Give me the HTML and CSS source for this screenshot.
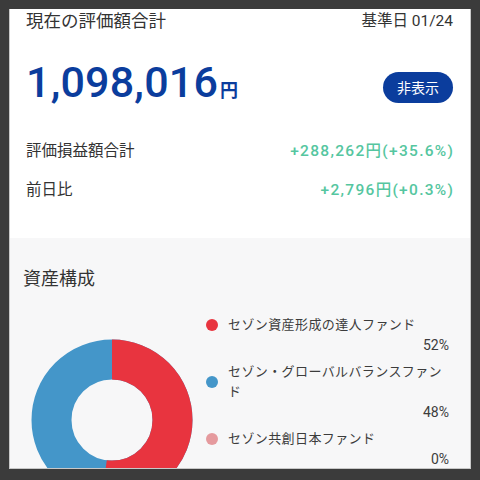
FILE: index.html
```html
<!DOCTYPE html>
<html lang="ja">
<head>
<meta charset="utf-8">
<link rel="stylesheet" href="styles.css">
</head>
<body>
<div class="panel">
  <section class="summary">
    <div class="header">
      <h1 class="title">現在の評価額合計</h1>
      <span class="date">基準日 01/24</span>
    </div>
    <div class="amount-row">
      <div class="amount"><span class="num">1,098,016</span><span class="yen">円</span></div>
      <button class="hide-btn">非表示</button>
    </div>
    <div class="stat">
      <span class="label">評価損益額合計</span>
      <span class="value">+288,262円(+35.6%)</span>
    </div>
    <div class="stat">
      <span class="label">前日比</span>
      <span class="value">+2,796円(+0.3%)</span>
    </div>
  </section>
  <section class="assets">
    <h2 class="assets-title">資産構成</h2>
    <div class="chart-row">
      <svg class="donut" width="162" height="162" viewBox="0 0 162 162">
        <circle cx="81" cy="81" r="60.5" fill="none" stroke="#4496c9" stroke-width="40"/>
        <circle cx="81" cy="81" r="60.5" fill="none" stroke="#e8343f" stroke-width="40" stroke-dasharray="197.67 400" transform="rotate(-90 81 81)"/>
      </svg>
      <ul class="legend">
        <li class="item">
          <div class="name-row"><span class="dot red"></span><span class="name">セゾン資産形成の達人ファンド</span></div>
          <div class="pct">52%</div>
        </li>
        <li class="item">
          <div class="name-row"><span class="dot blue"></span><span class="name">セゾン・グローバルバランスファンド</span></div>
          <div class="pct">48%</div>
        </li>
        <li class="item">
          <div class="name-row"><span class="dot pink"></span><span class="name">セゾン共創日本ファンド</span></div>
          <div class="pct">0%</div>
        </li>
      </ul>
    </div>
  </section>
</div>
</body>
</html>
```
FILE: styles.css
```css
* { box-sizing: border-box; }
html, body { margin: 0; padding: 0; }
body {
  background: #3b3b3b;
  padding: 9px 9px 11px 9px;
  font-family: Roboto, "Noto Sans CJK JP", sans-serif;
  color: #333;
}
.panel {
  height: 460px;
  background: #fff;
  border: 1px solid #c8c8c8;
  border-top: none;
  overflow: hidden;
  display: flex;
  flex-direction: column;
}
.summary {
  flex: none;
  height: 229px;
  padding: 0 17px 0 16px;
  background: #fff;
}
.header {
  display: flex;
  justify-content: space-between;
  align-items: center;
  height: 25px;
}
.title {
  margin: 0;
  font-size: 17.5px;
  font-weight: 400;
  line-height: 25px;
}
.date {
  font-size: 15.5px;
  line-height: 25px;
}
.amount-row {
  margin-top: 28px;
  height: 50px;
  display: flex;
  justify-content: space-between;
  align-items: center;
}
.amount {
  color: #0b3d9d;
  font-weight: 500;
  line-height: 50px;
}
.num {
  font-size: 43px;
  letter-spacing: 0.2px;
}
.yen {
  font-size: 18px;
  font-weight: 700;
  margin-left: 2px;
}
.hide-btn {
  width: 70px;
  height: 31px;
  border: none;
  border-radius: 16px;
  background: #0b3d9d;
  color: #fff;
  font-family: inherit;
  font-size: 14px;
  padding: 0;
}
.stat {
  display: flex;
  justify-content: space-between;
  align-items: center;
  height: 24px;
  margin-top: 15px;
}
.amount-row + .stat { margin-top: 25px; }
.label {
  font-size: 15.5px;
}
.value {
  font-size: 15.5px;
  font-weight: 500;
  color: #55c6a0;
  letter-spacing: 1.3px;
  margin-right: -1.3px;
}
.assets {
  flex: 1;
  min-height: 0;
  background: #f7f7f8;
  padding: 28px 21px 0 13px;
}
.assets-title {
  margin: 0;
  font-size: 18px;
  font-weight: 400;
  line-height: 26px;
}
.chart-row {
  display: flex;
  align-items: flex-start;
  margin-top: 23px;
}
.donut {
  flex: none;
  margin-left: 8px;
  margin-top: 24px;
}
.legend {
  list-style: none;
  margin: 0 0 0 13px;
  padding: 0;
  flex: 1;
  display: flex;
  flex-direction: column;
  gap: 7px;
  color: #3c3c3c;
}
.name-row {
  display: flex;
  align-items: center;
  gap: 10px;
}
.dot {
  flex: none;
  width: 12px;
  height: 12px;
  border-radius: 50%;
}
.dot.red { background: #e8343f; }
.dot.blue { background: #4496c9; }
.dot.pink { background: #e59a9e; }
.name {
  font-size: 13px;
  letter-spacing: 0.4px;
  line-height: 20px;
}
.pct {
  text-align: right;
  font-size: 14px;
  line-height: 20px;
}
```
